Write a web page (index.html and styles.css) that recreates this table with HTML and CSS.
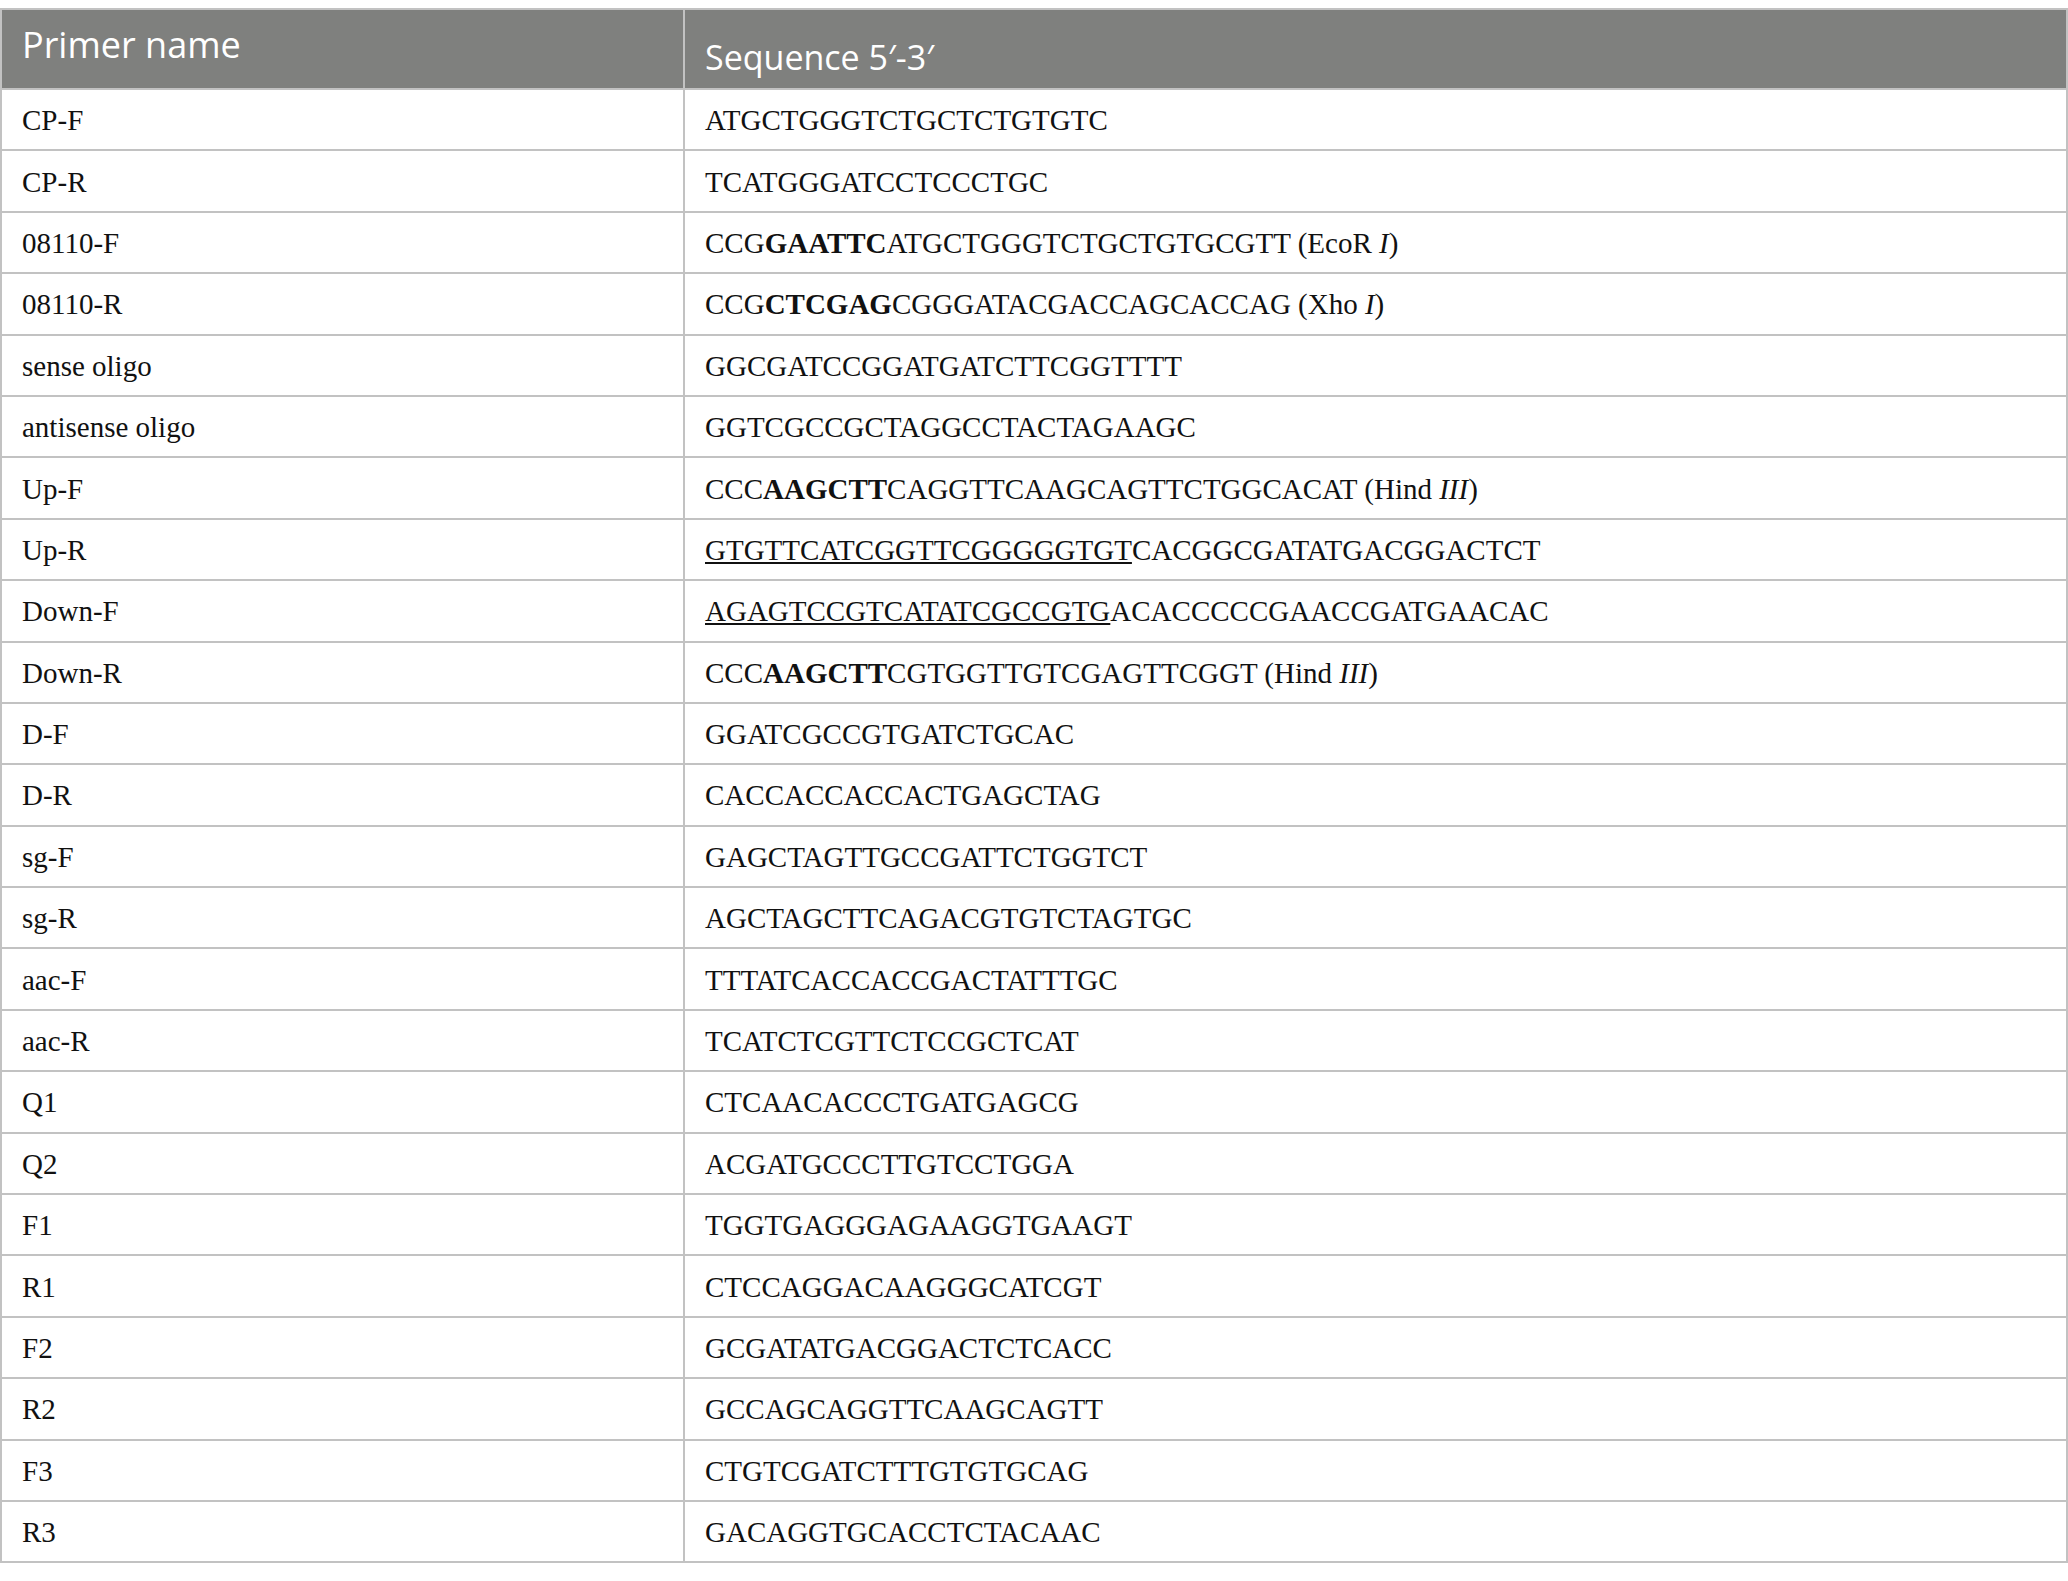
FILE: index.html
```html
<!DOCTYPE html>
<html>
<head>
<meta charset="utf-8">
<link rel="stylesheet" href="styles.css">
</head>
<body>
<table class="primers">
  <thead>
    <tr>
      <th class="col-name"><span class="h-name">Primer name</span></th>
      <th class="col-seq"><span class="h-seq">Sequence 5′-3′</span></th>
    </tr>
  </thead>
  <tbody>
    <tr><td>CP-F</td><td>ATGCTGGGTCTGCTCTGTGTC</td></tr>
    <tr><td>CP-R</td><td>TCATGGGATCCTCCCTGC</td></tr>
    <tr><td>08110-F</td><td>CCG<b>GAATTC</b>ATGCTGGGTCTGCTGTGCGTT (EcoR <i>I</i>)</td></tr>
    <tr><td>08110-R</td><td>CCG<b>CTCGAG</b>CGGGATACGACCAGCACCAG (Xho <i>I</i>)</td></tr>
    <tr><td>sense oligo</td><td>GGCGATCCGGATGATCTTCGGTTTT</td></tr>
    <tr><td>antisense oligo</td><td>GGTCGCCGCTAGGCCTACTAGAAGC</td></tr>
    <tr><td>Up-F</td><td>CCC<b>AAGCTT</b>CAGGTTCAAGCAGTTCTGGCACAT (Hind <i>III</i>)</td></tr>
    <tr><td>Up-R</td><td><u>GTGTTCATCGGTTCGGGGGTGT</u>CACGGCGATATGACGGACTCT</td></tr>
    <tr><td>Down-F</td><td><u>AGAGTCCGTCATATCGCCGTG</u>ACACCCCCGAACCGATGAACAC</td></tr>
    <tr><td>Down-R</td><td>CCC<b>AAGCTT</b>CGTGGTTGTCGAGTTCGGT (Hind <i>III</i>)</td></tr>
    <tr><td>D-F</td><td>GGATCGCCGTGATCTGCAC</td></tr>
    <tr><td>D-R</td><td>CACCACCACCACTGAGCTAG</td></tr>
    <tr><td>sg-F</td><td>GAGCTAGTTGCCGATTCTGGTCT</td></tr>
    <tr><td>sg-R</td><td>AGCTAGCTTCAGACGTGTCTAGTGC</td></tr>
    <tr><td>aac-F</td><td>TTTATCACCACCGACTATTTGC</td></tr>
    <tr><td>aac-R</td><td>TCATCTCGTTCTCCGCTCAT</td></tr>
    <tr><td>Q1</td><td>CTCAACACCCTGATGAGCG</td></tr>
    <tr><td>Q2</td><td>ACGATGCCCTTGTCCTGGA</td></tr>
    <tr><td>F1</td><td>TGGTGAGGGAGAAGGTGAAGT</td></tr>
    <tr><td>R1</td><td>CTCCAGGACAAGGGCATCGT</td></tr>
    <tr><td>F2</td><td>GCGATATGACGGACTCTCACC</td></tr>
    <tr><td>R2</td><td>GCCAGCAGGTTCAAGCAGTT</td></tr>
    <tr><td>F3</td><td>CTGTCGATCTTTGTGTGCAG</td></tr>
    <tr><td>R3</td><td>GACAGGTGCACCTCTACAAC</td></tr>
  </tbody>
</table>
</body>
</html>
```

FILE: styles.css
```css
html, body {
  margin: 0;
  padding: 0;
  background: #ffffff;
}

body {
  padding-top: 8px;
}

.primers {
  width: 2068px;
  border-collapse: collapse;
  table-layout: fixed;
  border: 2px solid #c2c2c2;
}

.primers th {
  background: #7f807e;
  color: #ffffff;
  font-family: "Open Sans", "Noto Sans", sans-serif;
  font-weight: 400;
  font-size: 34px;
  text-align: left;
  height: 80px;
  padding: 0 20px;
  border: 2px solid #c2c2c2;
  box-sizing: border-box;
}

.primers th.col-name {
  width: 683px;
  vertical-align: top;
  padding-top: 10px;
  font-size: 36px;
}

.primers th.col-seq {
  vertical-align: bottom;
  padding-bottom: 8px;
}

.primers td {
  font-family: "Liberation Serif", "Times New Roman", serif;
  font-size: 29px;
  color: #111111;
  height: 57.4px;
  padding: 2px 20px 0 20px;
  vertical-align: middle;
  border: 2px solid #c2c2c2;
  white-space: nowrap;
}

.primers td b {
  font-weight: 700;
}

.primers td u {
  text-decoration: underline;
  text-underline-offset: 2px;
  text-decoration-thickness: 2px;
}
```
